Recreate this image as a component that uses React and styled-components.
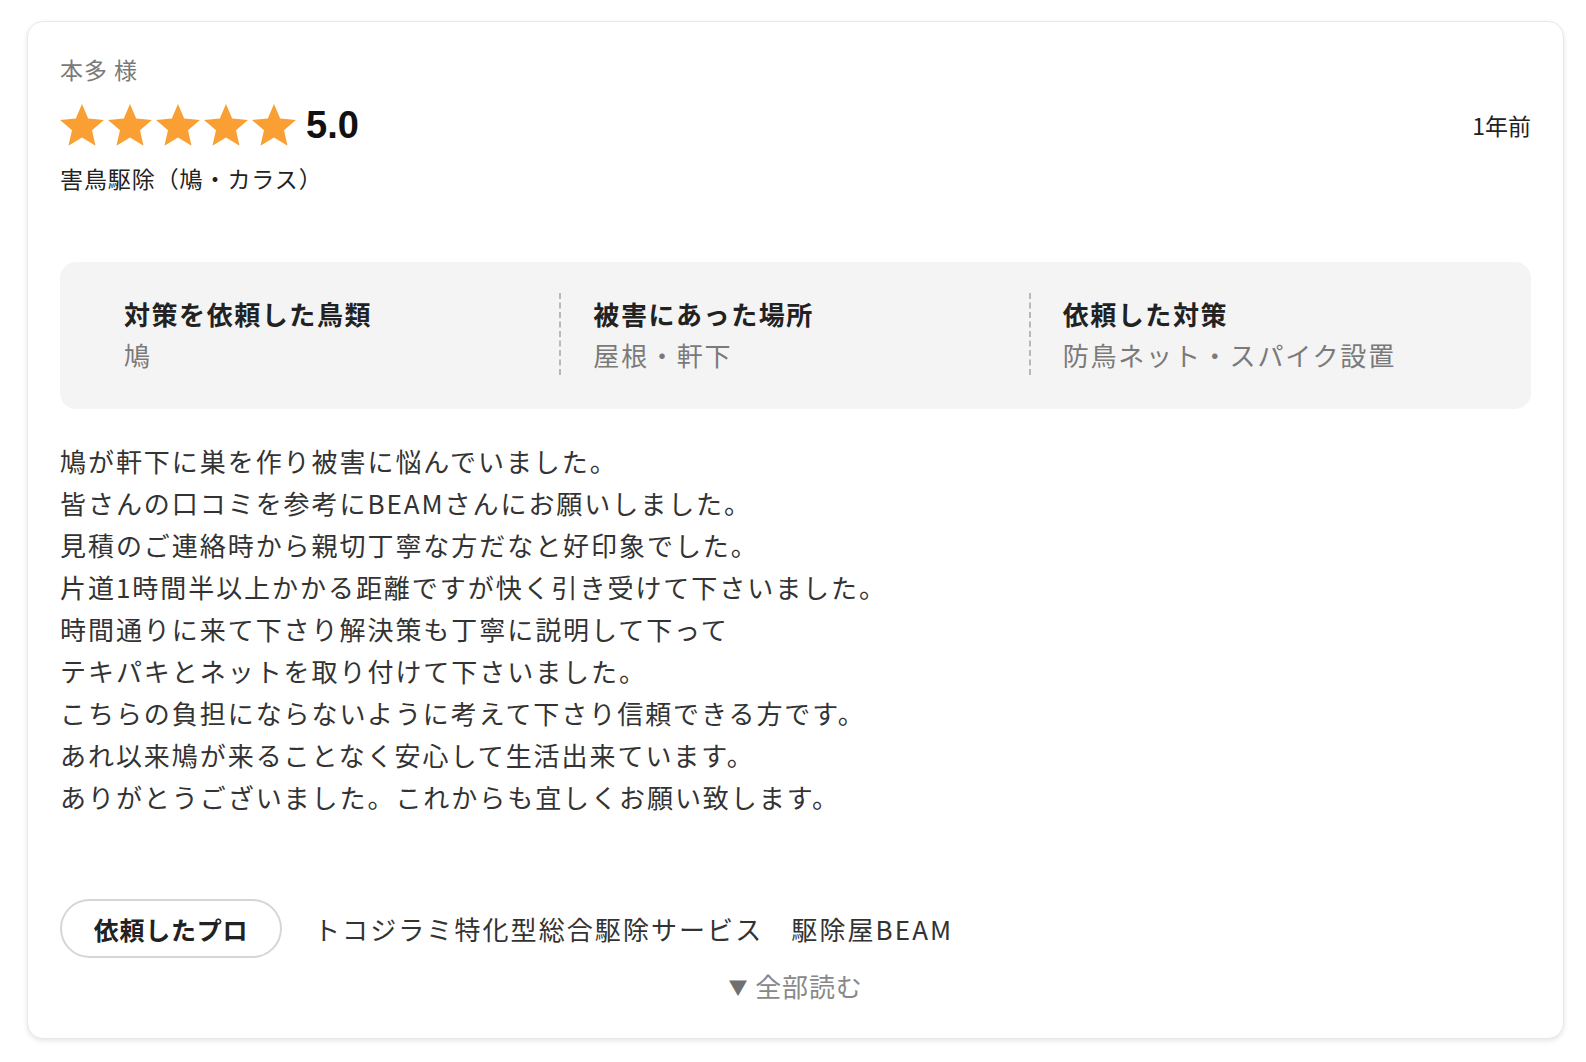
import styled, { createGlobalStyle } from "styled-components";

const GlobalStyle = createGlobalStyle`
  html, body {
    margin: 0;
    padding: 0;
    background: #ffffff;
  }
  body {
    font-family: "Noto Sans CJK JP", "Noto Sans", sans-serif;
    color: #333;
  }
`;

const Page = styled.div`
  padding: 21px 22px 22px 27px;
  box-sizing: border-box;
`;

const Card = styled.article`
  background: #fff;
  border: 1px solid #e8e8e8;
  border-radius: 16px;
  box-shadow: 0 2px 5px rgba(0, 0, 0, 0.1);
  padding: 31px 32px 34px;
  display: flex;
  flex-direction: column;
`;

const Reviewer = styled.div`
  font-size: 23px;
  line-height: 33px;
  color: #7a7a7a;
  letter-spacing: 0.04em;
`;

const RatingRow = styled.div`
  display: flex;
  align-items: center;
  justify-content: space-between;
  margin-top: 17px;
`;

const Rating = styled.div`
  display: flex;
  align-items: center;
  gap: 10px;
`;

const Stars = styled.div`
  display: flex;
  gap: 4px;
`;

const Score = styled.span`
  font-family: "Liberation Sans", Arial, sans-serif;
  font-weight: 700;
  font-size: 38px;
  line-height: 44px;
  color: #111;
`;

const TimeAgo = styled.span`
  font-size: 23px;
  line-height: 33px;
  color: #222;
`;

const Category = styled.div`
  margin-top: 15px;
  font-size: 23px;
  line-height: 33px;
  color: #222;
  letter-spacing: 0.04em;
`;

const InfoBox = styled.section`
  margin-top: 67px;
  background: #f4f4f4;
  border-radius: 16px;
  padding: 31px 33px 34px 30px;
  display: grid;
  grid-template-columns: repeat(3, 1fr);
`;

const InfoItem = styled.div`
  padding-left: 32px;
  border-left: ${({ first }) => (first ? "2px solid transparent" : "2px dashed #b8b8b8")};
`;

const InfoLabel = styled.div`
  font-size: 26px;
  line-height: 41px;
  font-weight: 700;
  color: #222;
  letter-spacing: 0.06em;
`;

const InfoValue = styled.div`
  font-size: 26px;
  line-height: 41px;
  color: #7a7a7a;
  letter-spacing: 0.07em;
`;

const Body = styled.p`
  margin: 31px 0 0;
  font-size: 26px;
  line-height: 42px;
  color: #333;
  letter-spacing: 0.075em;
  white-space: pre-line;
`;

const ProRow = styled.div`
  margin-top: 81px;
  display: flex;
  align-items: center;
  gap: 32px;
`;

const ProBadge = styled.span`
  display: inline-flex;
  align-items: center;
  justify-content: center;
  width: 222px;
  height: 59px;
  box-sizing: border-box;
  border: 2px solid #d6d6d6;
  border-radius: 999px;
  font-size: 25px;
  font-weight: 700;
  color: #222;
  letter-spacing: 0.03em;
`;

const ProName = styled.span`
  font-size: 26px;
  line-height: 36px;
  color: #333;
  letter-spacing: 0.08em;
`;

const ReadMore = styled.button`
  align-self: center;
  margin-top: 10px;
  background: none;
  border: 0;
  padding: 0;
  font-family: inherit;
  font-size: 26px;
  line-height: 36px;
  color: #888;
  cursor: pointer;
  letter-spacing: 0.03em;
  display: flex;
  align-items: center;
  gap: 7px;
`;

const Caret = styled.span`
  font-size: 19px;
  line-height: 1;
  color: #707070;
`;

const Star = () => (
  <svg width="44" height="42" viewBox="2 2 20 19.1">
    <path
      d="M12 17.27L18.18 21l-1.64-7.03L22 9.24l-7.19-.61L12 2 9.19 8.63 2 9.24l5.46 4.73L5.82 21z"
      fill="#fa9f33"
    />
  </svg>
);

const details = [
  { label: "対策を依頼した鳥類", value: "鳩" },
  { label: "被害にあった場所", value: "屋根・軒下" },
  { label: "依頼した対策", value: "防鳥ネット・スパイク設置" },
];

const reviewText = `鳩が軒下に巣を作り被害に悩んでいました。
皆さんの口コミを参考にBEAMさんにお願いしました。
見積のご連絡時から親切丁寧な方だなと好印象でした。
片道1時間半以上かかる距離ですが快く引き受けて下さいました。
時間通りに来て下さり解決策も丁寧に説明して下って
テキパキとネットを取り付けて下さいました。
こちらの負担にならないように考えて下さり信頼できる方です。
あれ以来鳩が来ることなく安心して生活出来ています。
ありがとうございました。これからも宜しくお願い致します。`;

export default function App() {
  return (
    <>
      <GlobalStyle />
      <Page>
        <Card>
          <Reviewer>本多 様</Reviewer>
          <RatingRow>
            <Rating>
              <Stars>
                {[0, 1, 2, 3, 4].map((i) => (
                  <Star key={i} />
                ))}
              </Stars>
              <Score>5.0</Score>
            </Rating>
            <TimeAgo>1年前</TimeAgo>
          </RatingRow>
          <Category>害鳥駆除（鳩・カラス）</Category>

          <InfoBox>
            {details.map((d, i) => (
              <InfoItem key={d.label} first={i === 0}>
                <InfoLabel>{d.label}</InfoLabel>
                <InfoValue>{d.value}</InfoValue>
              </InfoItem>
            ))}
          </InfoBox>

          <Body>{reviewText}</Body>

          <ProRow>
            <ProBadge>依頼したプロ</ProBadge>
            <ProName>トコジラミ特化型総合駆除サービス　駆除屋BEAM</ProName>
          </ProRow>
          <ReadMore type="button">
            <Caret>▼</Caret>
            全部読む
          </ReadMore>
        </Card>
      </Page>
    </>
  );
}
